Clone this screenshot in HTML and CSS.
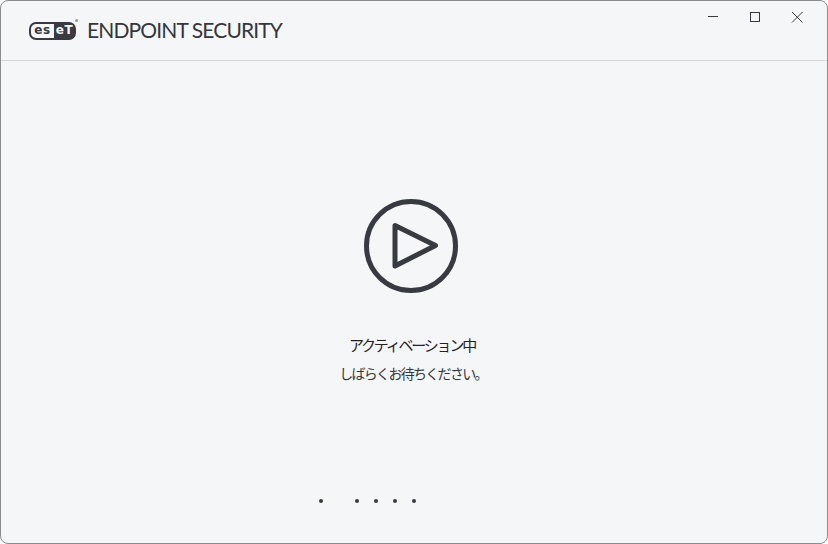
FILE: index.html
```html
<!DOCTYPE html>
<html lang="ja">

<head>
    <meta charset="UTF-8">
    <meta name="viewport" content="width=device-width, initial-scale=1.0">
    <title>ESET Endpoint Security</title>
    <link rel="stylesheet" href="styles.css">
</head>

<body>
    <div class="window">
        <header class="titlebar">
            <div class="brand">
                <div class="logo">
                    <span class="logo-es">es</span><span class="logo-et">eT</span>
                    <span class="logo-reg"></span>
                </div>
                <span class="product">ENDPOINT SECURITY</span>
            </div>
            <div class="controls">
                <svg class="control" width="12" height="12" viewBox="0 0 12 12">
                    <path d="M1 5.5H11" />
                </svg>
                <svg class="control" width="12" height="12" viewBox="0 0 12 12">
                    <rect x="1.5" y="1.5" width="9" height="9" />
                </svg>
                <svg class="control" width="12" height="12" viewBox="0 0 12 12">
                    <path d="M1 1L11.5 11.5M11.5 1L1 11.5" />
                </svg>
            </div>
        </header>

        <main class="content">
            <svg class="play-icon" width="96" height="96" viewBox="0 0 96 96">
                <circle cx="48" cy="48" r="44.5" />
                <path d="M32 27.5V68L72.5 47.5Z" />
            </svg>
            <p class="status-title">アクティベーション中</p>
            <p class="status-text">しばらくお待ちください。</p>
        </main>

        <div class="dots">
            <span class="dot dot-first"></span>
            <span class="dot"></span>
            <span class="dot"></span>
            <span class="dot"></span>
            <span class="dot"></span>
        </div>
    </div>
</body>

</html>
```

FILE: styles.css
```css
html,
body {
    height: 100%;
}

body {
    margin: 0;
    background-color: #fff;
    font-family: "Noto Sans CJK JP", "Noto Sans", sans-serif;
    overflow: hidden;
}

.window {
    box-sizing: border-box;
    height: 544px;
    display: flex;
    flex-direction: column;
    background-color: #f5f6f8;
    border: 1px solid #8c8c8c;
    border-radius: 8px;
}

.titlebar {
    flex: none;
    height: 59px;
    display: flex;
    justify-content: space-between;
    border-bottom: 1px solid #d6d6d6;
}

.brand {
    display: flex;
    align-items: center;
    padding-left: 28px;
}

.logo {
    position: relative;
    display: flex;
    width: 47px;
    height: 18px;
    box-sizing: border-box;
    border: 2px solid #373a40;
    border-radius: 7px;
    overflow: visible;
    font-family: "DejaVu Sans", sans-serif;
    font-size: 12px;
    font-weight: 700;
    line-height: 13px;
}

.logo-es {
    width: 23px;
    color: #373a40;
    text-align: center;
    letter-spacing: 0.5px;
}

.logo-et {
    flex: 1;
    margin: -1px -1px -1px 0;
    color: #f5f6f8;
    background-color: #373a40;
    border-radius: 0 6px 6px 0;
    text-align: center;
    line-height: 15px;
    letter-spacing: 0.5px;
}

.logo-reg {
    position: absolute;
    top: -5px;
    right: -4px;
    width: 3px;
    height: 3px;
    border-radius: 50%;
    background-color: #9a9a9a;
}

.product {
    margin: -2px 0 0 11px;
    font-family: Lato, sans-serif;
    font-size: 21px;
    font-weight: 400;
    letter-spacing: -0.87px;
    color: #33363b;
}

.controls {
    display: flex;
    gap: 30px;
    padding: 10px 24px 0 0;
}

.control {
    fill: none;
    stroke: #373a40;
    stroke-width: 1;
}

.content {
    flex: 1;
    display: flex;
    flex-direction: column;
    align-items: center;
    padding-top: 137px;
    min-height: 0;
}

.play-icon {
    margin-right: 6px;
    fill: none;
    stroke: #373a40;
    stroke-width: 5;
    stroke-linejoin: round;
}

.status-title {
    margin: 41px 4px 0 0;
    font-size: 15px;
    line-height: 20px;
    letter-spacing: -2.2px;
    color: #1f2125;
}

.status-text {
    margin: 8px 2px 0 0;
    font-size: 14px;
    line-height: 20px;
    letter-spacing: -1.7px;
    color: #33363b;
}

.dots {
    flex: none;
    display: flex;
    gap: 15px;
    padding: 0 0 40px 318px;
}

.dot {
    width: 4px;
    height: 4px;
    border-radius: 50%;
    background-color: #373a40;
}

.dot-first {
    margin-right: 17px;
}
```
